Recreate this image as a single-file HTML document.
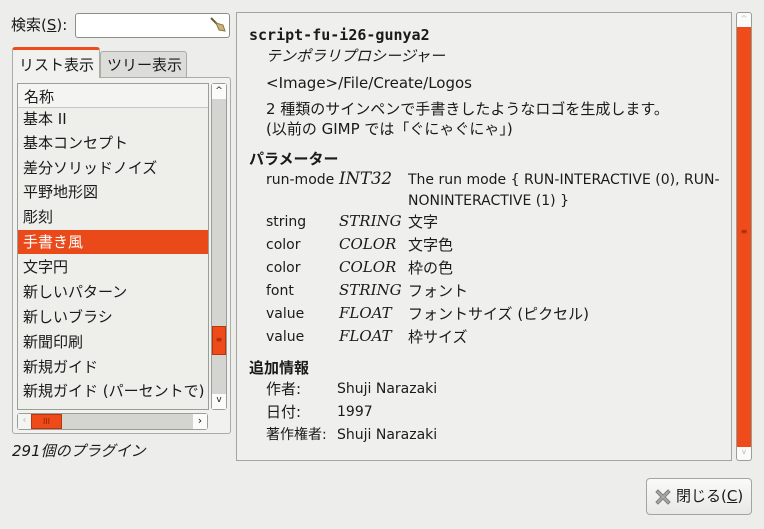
<!DOCTYPE html>
<html><head><meta charset="utf-8"><style>
*{box-sizing:border-box;margin:0;padding:0}
body{width:764px;height:529px;background:#edeeeb;font-family:"DejaVu Sans","Liberation Sans","Noto Sans CJK JP",sans-serif;font-size:14px;color:#1a1a1a;position:relative;overflow:hidden}
.a{position:absolute;white-space:nowrap}
.row{position:absolute;left:23px;height:24px;line-height:24px;font-size:15px}
.t{position:absolute;white-space:nowrap;line-height:16px}
.j{font-size:15px}
.i{font-family:"DejaVu Serif","Liberation Serif",serif;font-style:italic;font-size:15px}
</style></head><body>
<div class="a j" style="left:11px;top:15px;line-height:20px">検索(<u>S</u>):</div>
<div class="a" style="left:75px;top:13px;width:155px;height:25px;border:1px solid #8b8f88;border-radius:3px;background:#fff"></div>
<svg class="a" style="left:208px;top:16px" width="20" height="18"><line x1="3" y1="2" x2="9" y2="8" stroke="#6b5a30" stroke-width="2"/><path d="M8 7 L15 9 L17 15 L11 14 Z" fill="#c9b57a" stroke="#8a7845"/></svg>
<div class="a j" style="left:12px;top:47px;width:88px;height:32px;border:1px solid #a9ada5;border-bottom:none;border-top:3px solid #ef4a1b;border-radius:3px 3px 0 0;background:#f1f1ef;padding:4px 0 0 6px">リスト表示</div>
<div class="a j" style="left:100px;top:51px;width:87px;height:27px;border:1px solid #a9ada5;border-radius:3px 3px 0 0;background:#dcdcd8;padding:2px 0 0 6px">ツリー表示</div>
<div class="a" style="left:12px;top:77px;width:219px;height:357px;border:1px solid #a9ada5;border-radius:0 3px 3px 3px;background:#f1f1ef"></div>
<div class="a" style="left:13px;top:77px;width:86px;height:2px;background:#f1f1ef"></div>
<div class="a" style="left:17px;top:83px;width:192px;height:327px;border:1px solid #9a9e97;background:#eeeeeb;overflow:hidden">
<div class="a j" style="left:0;top:0;width:190px;height:24px;background:#f4f4f2;border-bottom:1px solid #c5c7c2;padding:2px 0 0 6px;z-index:2">名称</div>
<div class="row" style="top:23px;left:5px">基本 II</div>
<div class="row" style="top:47px;left:5px">基本コンセプト</div>
<div class="row" style="top:72px;left:5px">差分ソリッドノイズ</div>
<div class="row" style="top:96px;left:5px">平野地形図</div>
<div class="row" style="top:121px;left:5px">彫刻</div>
<div class="a" style="left:0;top:146px;width:190px;height:24px;background:#ea4a1a"></div>
<div class="row" style="top:146px;left:5px;color:#fff">手書き風</div>
<div class="row" style="top:171px;left:5px">文字円</div>
<div class="row" style="top:196px;left:5px">新しいパターン</div>
<div class="row" style="top:221px;left:5px">新しいブラシ</div>
<div class="row" style="top:246px;left:5px">新聞印刷</div>
<div class="row" style="top:271px;left:5px">新規ガイド</div>
<div class="row" style="top:295px;left:5px">新規ガイド (パーセントで)</div>
</div>
<div class="a" style="left:211px;top:83px;width:16px;height:327px;border:1px solid #9a9e97;border-radius:3px;background:#d4d5d1"></div>
<div class="a" style="left:212px;top:84px;width:14px;height:15px;background:#fbfbfa;font-size:9px;text-align:center;line-height:14px">^</div>
<div class="a" style="left:212px;top:394px;width:14px;height:15px;background:#fbfbfa;font-size:9px;text-align:center;line-height:12px">v</div>
<div class="a" style="left:212px;top:326px;width:14px;height:29px;background:#ee4a1a;border:1px solid #b6360f;color:#8a2300;font-size:8px;text-align:center;line-height:26px">≡</div>
<div class="a" style="left:17px;top:413px;width:191px;height:17px;border:1px solid #9a9e97;border-radius:3px;background:#d4d5d1"></div>
<div class="a" style="left:18px;top:414px;width:13px;height:15px;background:#f4f4f2;color:#bbb;font-size:10px;line-height:14px;text-align:center">‹</div>
<div class="a" style="left:193px;top:414px;width:14px;height:15px;background:#fbfbfa;font-size:11px;line-height:14px;text-align:center">›</div>
<div class="a" style="left:31px;top:414px;width:31px;height:15px;background:#ee4a1a;border:1px solid #b6360f;color:#8a2300;font-size:8px;line-height:13px;text-align:center">III</div>
<div class="a j" style="left:12px;top:440px;font-style:italic">291個のプラグイン</div>
<div class="a" style="left:236px;top:12px;width:496px;height:449px;border:1px solid #a2a69e;background:#eff0ed"></div>
<div class="t" style="left:249px;top:27px;font-family:'DejaVu Sans Mono','Liberation Mono',monospace;font-weight:bold;font-size:15px">script-fu-i26-gunya2</div>
<div class="t j" style="left:266px;top:48px;font-style:italic">テンポラリプロシージャー</div>
<div class="t" style="left:266px;top:75px;font-size:15px">&lt;Image&gt;/File/Create/Logos</div>
<div class="t j" style="left:266px;top:101px">2 種類のサインペンで手書きしたようなロゴを生成します。</div>
<div class="t j" style="left:266px;top:121px">(以前の GIMP では「ぐにゃぐにゃ」)</div>
<div class="t j" style="left:249px;top:151px;font-weight:bold">パラメーター</div>
<div class="t" style="left:266px;top:172px">run-mode</div><div class="t i" style="left:339px;top:171px;font-size:16.5px">INT32</div><div class="t" style="left:408px;top:172px">The run mode { RUN-INTERACTIVE (0), RUN-</div>
<div class="t" style="left:408px;top:193px">NONINTERACTIVE (1) }</div>
<div class="t" style="left:266px;top:214px">string</div><div class="t i" style="left:339px;top:213px">STRING</div><div class="t j" style="left:408px;top:214px">文字</div>
<div class="t" style="left:266px;top:237px">color</div><div class="t i" style="left:339px;top:236px">COLOR</div><div class="t j" style="left:408px;top:237px">文字色</div>
<div class="t" style="left:266px;top:260px">color</div><div class="t i" style="left:339px;top:259px">COLOR</div><div class="t j" style="left:408px;top:260px">枠の色</div>
<div class="t" style="left:266px;top:283px">font</div><div class="t i" style="left:339px;top:282px">STRING</div><div class="t j" style="left:408px;top:283px">フォント</div>
<div class="t" style="left:266px;top:306px">value</div><div class="t i" style="left:339px;top:305px">FLOAT</div><div class="t j" style="left:408px;top:306px">フォントサイズ (ピクセル)</div>
<div class="t" style="left:266px;top:329px">value</div><div class="t i" style="left:339px;top:328px">FLOAT</div><div class="t j" style="left:408px;top:329px">枠サイズ</div>
<div class="t j" style="left:249px;top:360px;font-weight:bold">追加情報</div>
<div class="t j" style="left:266px;top:381px">作者:</div><div class="t" style="left:337px;top:381px">Shuji Narazaki</div>
<div class="t j" style="left:266px;top:404px">日付:</div><div class="t" style="left:337px;top:404px">1997</div>
<div class="t" style="left:266px;top:427px;font-size:14px">著作権者:</div><div class="t" style="left:337px;top:427px">Shuji Narazaki</div>
<div class="a" style="left:736px;top:12px;width:16px;height:449px;border:1px solid #9a9e97;border-radius:3px;background:#fbfbfa"></div>
<div class="a" style="left:737px;top:12px;width:14px;height:14px;color:#bbb;font-size:8px;text-align:center;line-height:14px">^</div>
<div class="a" style="left:737px;top:447px;width:14px;height:13px;color:#bbb;font-size:8px;text-align:center;line-height:10px">v</div>
<div class="a" style="left:737px;top:27px;width:14px;height:420px;background:#f04b1a;color:#8a2300;font-size:8px;text-align:center;line-height:410px">≡</div>
<div class="a" style="left:646px;top:478px;width:106px;height:37px;border:1px solid #a2a69e;border-radius:4px;background:linear-gradient(#fafaf9,#e8e9e6)"></div>
<svg class="a" style="left:654px;top:488px" width="18" height="18"><path d="M2 4 L4 2 L9 7 L14 2 L16 4 L11 9 L16 14 L14 16 L9 11 L4 16 L2 14 L7 9 Z" fill="#a9aba6" stroke="#7d7f7a"/></svg>
<div class="a j" style="left:676px;top:487px;line-height:18px">閉じる(<u>C</u>)</div>
</body></html>
